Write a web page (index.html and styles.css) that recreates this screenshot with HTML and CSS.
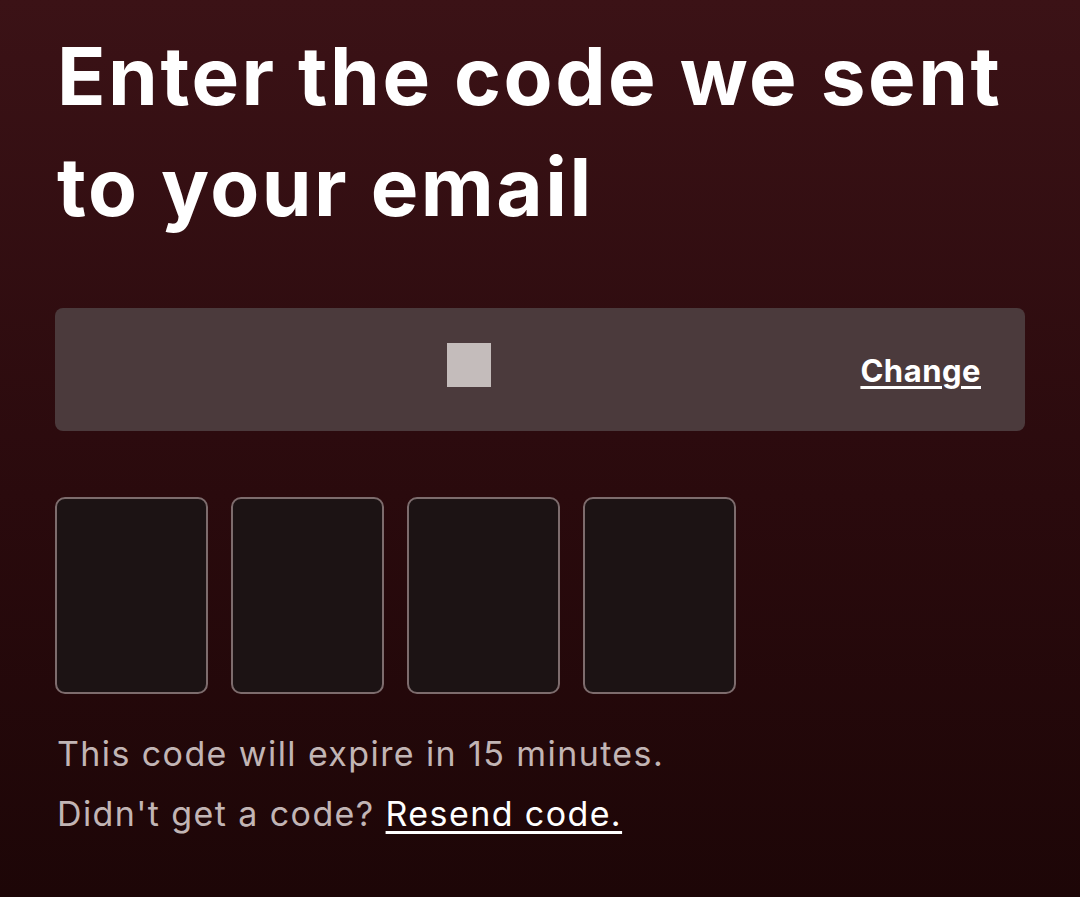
FILE: index.html
```html
<!DOCTYPE html>
<html lang="en">
  <head>
    <meta charset="UTF-8" />
    <meta name="viewport" content="width=device-width, initial-scale=1.0" />
    <title>Enter code</title>
    <link rel="stylesheet" href="styles.css">
  </head>
  <body>
    <main class="verify">
      <h1>Enter the code we sent to your email</h1>

      <div class="email-box">
        <span class="email-mask"></span>
        <a href="#" class="change-link">Change</a>
      </div>

      <div class="code-inputs">
        <input type="text" maxlength="1" inputmode="numeric" />
        <input type="text" maxlength="1" inputmode="numeric" />
        <input type="text" maxlength="1" inputmode="numeric" />
        <input type="text" maxlength="1" inputmode="numeric" />
      </div>

      <p class="hint">This code will expire in 15 minutes.</p>
      <p class="hint">Didn't get a code? <a href="#" class="resend">Resend code.</a></p>
    </main>
  </body>
</html>
```

FILE: styles.css
```css
* {
  box-sizing: border-box;
  margin: 0;
  padding: 0;
  font-family: "Inter", "Liberation Sans", Arial, sans-serif;
}

body {
  background: linear-gradient(180deg, #3b1216 0%, #2a0a0d 55%, #1d0607 100%);
  min-height: 100vh;
  color: #fff;
}

.verify {
  padding: 20px 55px 0 55px;
}

h1 {
  font-size: 80px;
  font-weight: 700;
  line-height: 111px;
  letter-spacing: 2.5px;
  padding-left: 2px;
  margin-bottom: 66px;
}

.email-box {
  height: 123px;
  background: #4b3a3c;
  border-radius: 8px;
  display: flex;
  align-items: center;
  justify-content: space-between;
  padding: 0 44px 0 392px;
}

.email-mask {
  width: 44px;
  height: 44px;
  background: #c4bcbb;
  margin-top: -10px;
}

.change-link {
  color: #fff;
  font-size: 31px;
  font-weight: 700;
  letter-spacing: 0.5px;
  text-decoration: underline;
  text-underline-offset: 4px;
  text-decoration-thickness: 3px;
  margin-top: 2px;
}

.code-inputs {
  display: flex;
  gap: 23px;
  margin: 66px 0 30px;
}

.code-inputs input {
  width: 153px;
  height: 197px;
  background: #1c1314;
  border: 2px solid #7d6c6d;
  border-radius: 10px;
  color: #fff;
  font-size: 48px;
  text-align: center;
}

.code-inputs input:focus {
  outline: none;
  border-color: #fff;
}

.hint {
  font-size: 34px;
  line-height: 60px;
  letter-spacing: 1.4px;
  color: #c2b5b5;
  padding-left: 2px;
}

.resend {
  color: #fff;
  text-decoration: underline;
  text-underline-offset: 5px;
  text-decoration-thickness: 3px;
}
```
